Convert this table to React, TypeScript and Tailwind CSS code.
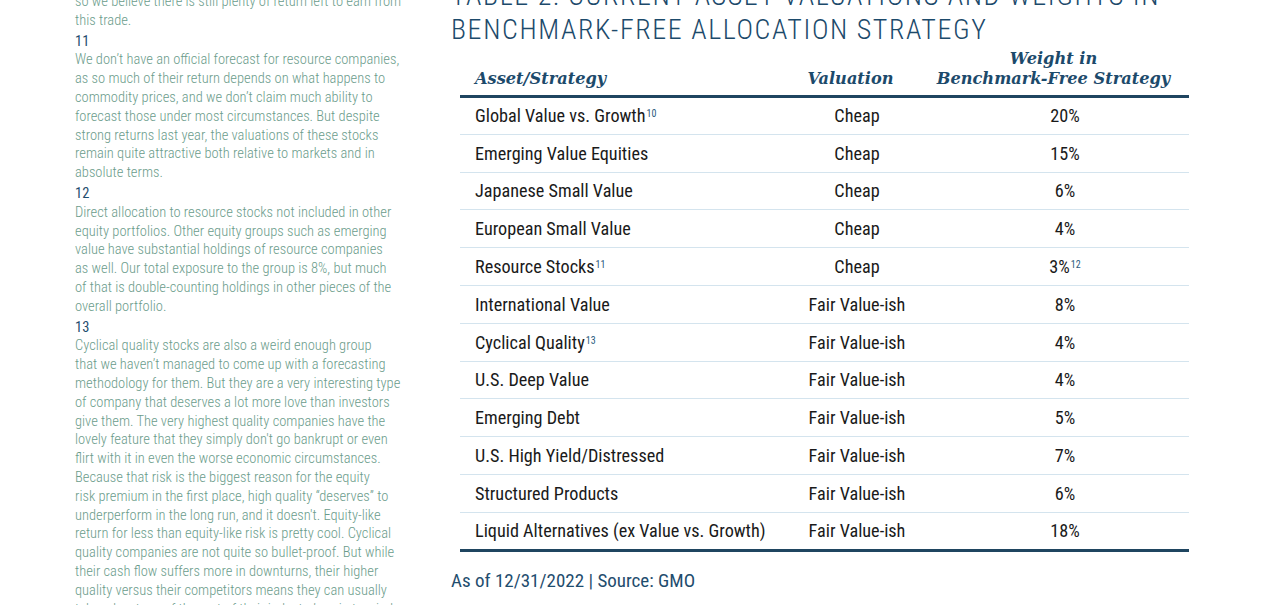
import React from "react";

const rows: { asset: string; assetNote?: string; valuation: string; weight: string; weightNote?: string }[] = [
  { asset: "Global Value vs. Growth", assetNote: "10", valuation: "Cheap", weight: "20%" },
  { asset: "Emerging Value Equities", valuation: "Cheap", weight: "15%" },
  { asset: "Japanese Small Value", valuation: "Cheap", weight: "6%" },
  { asset: "European Small Value", valuation: "Cheap", weight: "4%" },
  { asset: "Resource Stocks", assetNote: "11", valuation: "Cheap", weight: "3%", weightNote: "12" },
  { asset: "International Value", valuation: "Fair Value-ish", weight: "8%" },
  { asset: "Cyclical Quality", assetNote: "13", valuation: "Fair Value-ish", weight: "4%" },
  { asset: "U.S. Deep Value", valuation: "Fair Value-ish", weight: "4%" },
  { asset: "Emerging Debt", valuation: "Fair Value-ish", weight: "5%" },
  { asset: "U.S. High Yield/Distressed", valuation: "Fair Value-ish", weight: "7%" },
  { asset: "Structured Products", valuation: "Fair Value-ish", weight: "6%" },
  { asset: "Liquid Alternatives (ex Value vs. Growth)", valuation: "Fair Value-ish", weight: "18%" },
];

// footnote text keeps the line breaks of the printed page
const intro = ["so we believe there is still plenty of return left to earn from", "this trade."];

const notes = [
  {
    n: "11",
    lines: [
      "We don’t have an official forecast for resource companies,",
      "as so much of their return depends on what happens to",
      "commodity prices, and we don’t claim much ability to",
      "forecast those under most circumstances. But despite",
      "strong returns last year, the valuations of these stocks",
      "remain quite attractive both relative to markets and in",
      "absolute terms.",
    ],
  },
  {
    n: "12",
    lines: [
      "Direct allocation to resource stocks not included in other",
      "equity portfolios. Other equity groups such as emerging",
      "value have substantial holdings of resource companies",
      "as well. Our total exposure to the group is 8%, but much",
      "of that is double-counting holdings in other pieces of the",
      "overall portfolio.",
    ],
  },
  {
    n: "13",
    lines: [
      "Cyclical quality stocks are also a weird enough group",
      "that we haven’t managed to come up with a forecasting",
      "methodology for them. But they are a very interesting type",
      "of company that deserves a lot more love than investors",
      "give them. The very highest quality companies have the",
      "lovely feature that they simply don't go bankrupt or even",
      "flirt with it in even the worse economic circumstances.",
      "Because that risk is the biggest reason for the equity",
      "risk premium in the first place, high quality “deserves” to",
      "underperform in the long run, and it doesn't. Equity-like",
      "return for less than equity-like risk is pretty cool. Cyclical",
      "quality companies are not quite so bullet-proof. But while",
      "their cash flow suffers more in downturns, their higher",
      "quality versus their competitors means they can usually",
      "take advantage of the rest of their industry’s pain to wind",
    ],
  },
];

const cond = "font-['Roboto_Condensed','Liberation_Sans_Narrow','DejaVu_Sans_Condensed',sans-serif]";

export default function App() {
  return (
    <div className={`flex w-[1275px] h-[605px] overflow-hidden bg-white ${cond}`}>
      {/* Footnotes */}
      <div className="w-[330px] ml-[75px] shrink-0 mt-[-7px] text-[14.5px] leading-[18.8px] font-light text-[#6b9c8b] whitespace-nowrap">
        {intro.map((l) => (
          <div key={l}>{l}</div>
        ))}
        {notes.map((note) => (
          <div key={note.n} className="mt-[2px]">
            <div className="text-[#1f4d6e] font-normal">{note.n}</div>
            {note.lines.map((l) => (
              <div key={l}>{l}</div>
            ))}
          </div>
        ))}
      </div>

      {/* Table */}
      <div className="ml-[46px] w-[740px] shrink-0 mt-[-21px]">
        <h2 className="text-[28px] leading-[34px] font-light tracking-[1.6px] text-[#1c4a6b] whitespace-nowrap">
          TABLE 2: CURRENT ASSET VALUATIONS AND WEIGHTS IN
          <br />
          BENCHMARK-FREE ALLOCATION STRATEGY
        </h2>

        <table className="ml-[9px] mt-[2px] w-[729px] table-fixed border-collapse whitespace-nowrap">
          <colgroup>
            <col className="w-[313px]" />
            <col className="w-[168px]" />
            <col className="w-[248px]" />
          </colgroup>
          <thead>
            <tr className="border-b-[3px] border-[#1f4560] font-['Georgia','DejaVu_Serif',serif] italic font-bold text-[16.2px] leading-[20px] text-[#1c4a6b]">
              <th className="text-left align-bottom pl-[15px] pb-[6px]">Asset/Strategy</th>
              <th className="text-center align-bottom pb-[6px] pr-[13px]">Valuation</th>
              <th className="align-bottom pb-[6px]">
                <div className="-ml-[23px] text-center">
                  Weight in
                  <br />
                  Benchmark-Free Strategy
                </div>
              </th>
            </tr>
          </thead>
          <tbody className="text-[18.2px] text-[#1a1a1a]">
            {rows.map((r, i) => (
              <tr
                key={r.asset}
                className={
                  i === rows.length - 1
                    ? "h-[37.8px] border-b-[3px] border-[#1f4560]"
                    : "h-[37.8px] border-b-[1.5px] border-[#d4e4ee]"
                }
              >
                <td className="pl-[15px]">
                  {r.asset}
                  {r.assetNote && <sup className="text-[10px] text-[#2a5a7d] ml-[1px]">{r.assetNote}</sup>}
                </td>
                <td className="text-center">{r.valuation}</td>
                <td className="text-center">
                  {r.weight}
                  {r.weightNote && <sup className="text-[10px] text-[#2a5a7d] ml-[1px]">{r.weightNote}</sup>}
                </td>
              </tr>
            ))}
          </tbody>
        </table>

        <p className="mt-[15px] text-[19px] text-[#1f4d6e]">As of 12/31/2022 | Source: GMO</p>
      </div>
    </div>
  );
}
